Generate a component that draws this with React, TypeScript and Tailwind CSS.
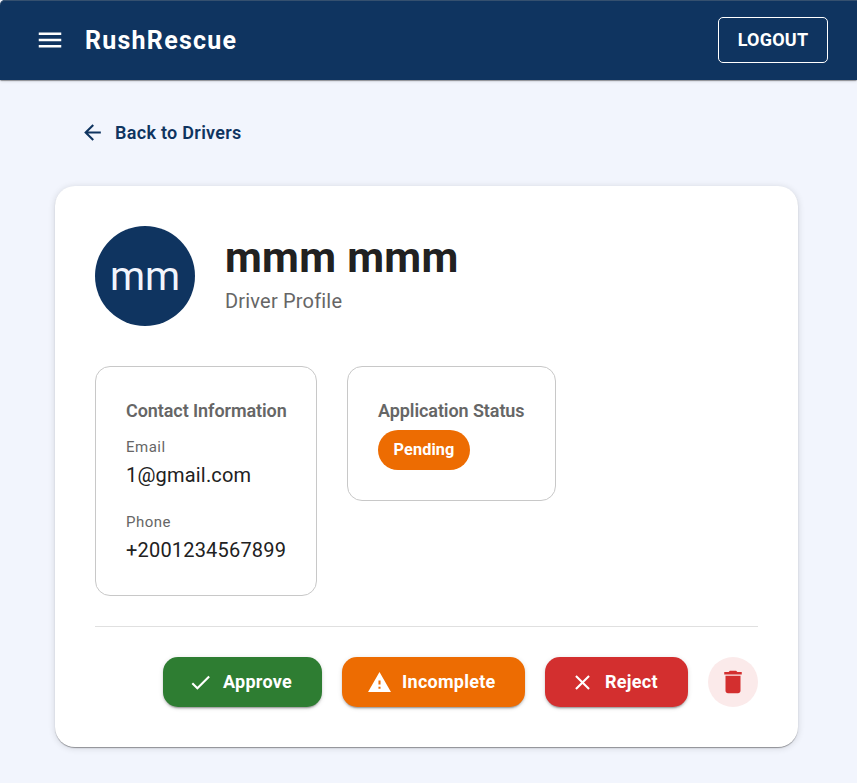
import type { ReactNode } from "react";
import { MdArrowBack, MdCheck, MdClose, MdDelete, MdMenu, MdWarning } from "react-icons/md";

function Header() {
  return (
    <header className="flex h-20 items-center justify-between rounded-tl-[5px] bg-[#0f3460] pl-[35px] pr-[29px] text-white shadow-[inset_0px_1px_0px_0px_#35506f,0px_2px_1px_-1px_rgba(0,0,0,0.2),0px_1px_1px_0px_rgba(0,0,0,0.2),0px_1px_3.75px_0px_rgba(0,0,0,0.12)]">
      <div className="flex items-center gap-5">
        <button aria-label="Menu"><MdMenu size={30} /></button>
        <h1 className="pt-0.5 text-[25px] font-bold leading-10 tracking-[1.25px]">RushRescue</h1>
      </div>
      <button className="h-[46px] w-[110px] rounded-[5px] border border-white pb-0.5 text-[18px] font-bold tracking-[0.2px]">
        LOGOUT
      </button>
    </header>
  );
}

function Action({ icon, label, className }: { icon: ReactNode; label: string; className: string }) {
  return (
    <button
      className={`flex h-[50px] items-center gap-2.5 rounded-[15px] pl-[25px] text-[18px] font-bold tracking-[0.27px] text-white shadow-[0px_3px_1px_-2px_rgba(0,0,0,0.2),0px_2px_2px_0px_rgba(0,0,0,0.14),0px_1px_5px_0px_rgba(0,0,0,0.12)] ${className}`}
    >
      {icon}
      <span className="pb-0.5">{label}</span>
    </button>
  );
}

function Field({ label, value }: { label: string; value: string }) {
  return (
    <div>
      <div className="text-[15px] leading-[25px] tracking-[0.5px] text-[#666666]">{label}</div>
      <div className="text-[20px] leading-[30px] tracking-[0.19px]">{value}</div>
    </div>
  );
}

function InfoTitle({ children }: { children: ReactNode }) {
  return (
    <h3 className="whitespace-nowrap pb-px text-[18px] font-semibold leading-[27px] tracking-[-0.08px] text-[#666666]">
      {children}
    </h3>
  );
}

export default function App() {
  return (
    <div className="min-h-screen bg-[#f2f5fd] font-['Roboto',sans-serif] text-[#212121]">
      <Header />
      <main className="pl-[55px] pr-[59px]">
        <button className="mt-[35px] ml-[25px] flex h-[35px] items-center gap-2.5 text-[18px] font-semibold tracking-[0.3px] text-[#0f3460]">
          <MdArrowBack size={25} />
          <span className="pb-px">Back to Drivers</span>
        </button>
        <section className="mt-9 h-[561px] rounded-[20px] bg-white p-10 shadow-[0px_2px_1px_-1px_rgba(0,0,0,0.2),0px_1px_1px_0px_rgba(0,0,0,0.2),0px_1px_7px_0px_rgba(0,0,0,0.14)]">
          <div className="flex items-center gap-[30px]">
            <div className="flex size-[100px] items-center justify-center rounded-full bg-[#0f3460] pt-0.5 text-[40px] text-[#f2f5fd]">
              mm
            </div>
            <div className="-mt-1">
              <h2 className="text-[42.5px] font-bold leading-[50px] tracking-[0.31px]">mmm mmm</h2>
              <p className="-mb-px mt-[3px] text-[20px] leading-[30px] tracking-[0.19px] text-[#666666]">Driver Profile</p>
            </div>
          </div>
          <div className="mt-10 flex items-start gap-[30px]">
            <div className="h-[230px] w-[222px] rounded-[15px] border border-[#c8c8c8] p-[30px]">
              <InfoTitle>Contact Information</InfoTitle>
              <div className="mt-[9px] flex flex-col gap-5 pt-px">
                <Field label="Email" value="1@gmail.com" />
                <Field label="Phone" value="+2001234567899" />
              </div>
            </div>
            <div className="h-[135px] w-[209px] rounded-[15px] border border-[#c8c8c8] p-[30px]">
              <InfoTitle>Application Status</InfoTitle>
              <div className="mt-[5px] flex h-10 w-[92px] items-center justify-center rounded-[20px] bg-[#ed6c02] text-[16.25px] font-bold tracking-[0.1px] text-white">
                Pending
              </div>
            </div>
          </div>
          <div className="mt-[30px] flex justify-end gap-5 border-t border-[#e0e0e0] pt-[30px]">
            <Action icon={<MdCheck size={25} />} label="Approve" className="w-[159px] bg-[#2e7d32]" />
            <Action icon={<MdWarning size={25} />} label="Incomplete" className="w-[183px] bg-[#ed6c02]" />
            <Action icon={<MdClose size={25} />} label="Reject" className="w-[143px] bg-[#d32f2f]" />
            <button aria-label="Delete" className="flex size-[50px] items-center justify-center rounded-full bg-[#fbeaea] text-[#d32f2f]">
              <MdDelete size={30} />
            </button>
          </div>
        </section>
      </main>
    </div>
  );
}
